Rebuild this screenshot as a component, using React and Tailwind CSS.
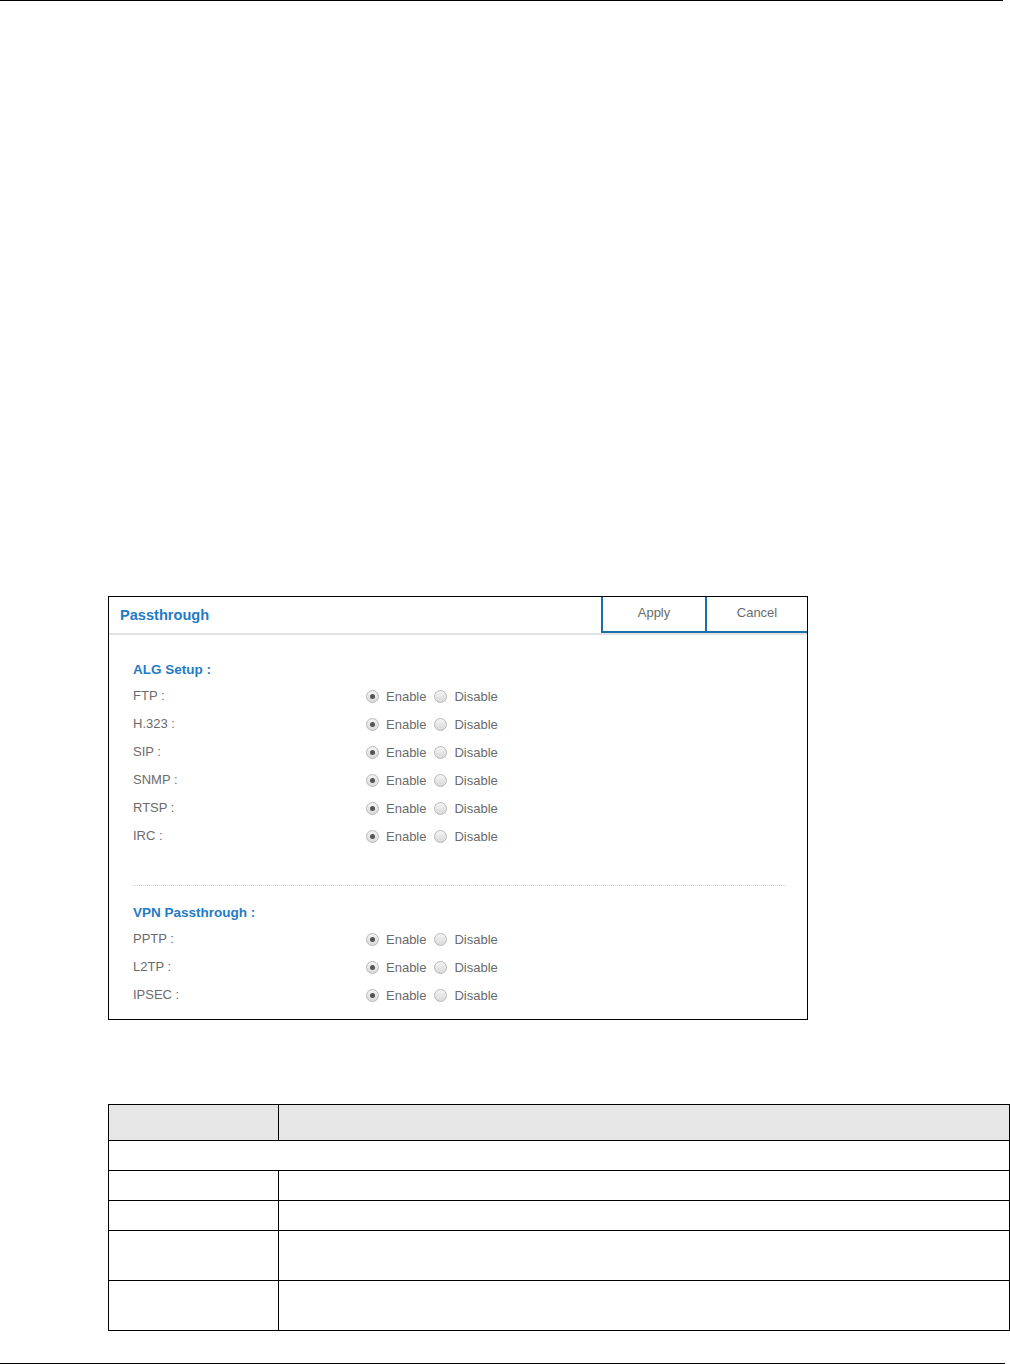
import React from "react";

function Radio({ checked }) {
  return (
    <span className="relative inline-flex h-[13px] w-[13px] items-center justify-center rounded-full border border-[#b8b8b8] bg-[linear-gradient(#f4f4f4,#d9d9d9)]">
      {checked && <span className="h-[5px] w-[5px] rounded-full bg-[#555]" />}
    </span>
  );
}

function Row({ label }) {
  return (
    <div className="flex h-[28px] items-center">
      <div className="w-[233px] text-[13px] text-[#6b6b6b] leading-none">{label}</div>
      <div className="flex items-center pt-[3px] text-[13px] text-[#6b6b6b] leading-none">
        <Radio checked />
        <span className="ml-[7px]">Enable</span>
        <span className="ml-[8px] flex"><Radio /></span>
        <span className="ml-[7px]">Disable</span>
      </div>
    </div>
  );
}

export default function App() {
  const alg = ["FTP :", "H.323 :", "SIP :", "SNMP :", "RTSP :", "IRC :"];
  const vpn = ["PPTP :", "L2TP :", "IPSEC :"];
  return (
    <div className="relative flex h-[1364px] w-[1010px] flex-col bg-white" style={{ fontFamily: '"Liberation Sans", Arial, sans-serif' }}>
      <div className="h-px w-[1003px] bg-black" />
      <div className="ml-[108px] mt-[595px] flex h-[424px] w-[700px] flex-col border border-black">
        <div className="flex h-[36px]">
          <div className="flex flex-1 items-center pl-[11px] pt-[1px] text-[14.6px] font-bold text-[#1f7bc6]">Passthrough</div>
          <div className="flex w-[104px] items-center justify-center border-b-2 border-l-2 border-[#1d6fac] pb-[2px] text-[13px] text-[#6b6b6b]">Apply</div>
          <div className="flex w-[102px] items-center justify-center border-b-2 border-l-2 border-[#1d6fac] pb-[2px] text-[13px] text-[#6b6b6b]">Cancel</div>
        </div>
        <div className="h-[2px] bg-[#e2e2e2]" />
        <div className="flex flex-col px-[24px] pt-[24px]">
          <div className="flex h-[22px] items-center text-[13.5px] font-bold text-[#1f7bc6]">ALG Setup :</div>
          {alg.map((l) => (
            <Row key={l} label={l} />
          ))}
          <div className="mr-[-3px] mt-[36px] border-t border-dotted border-[#cfcfcf]" />
          <div className="mt-[17px] flex h-[21px] items-center text-[13.5px] font-bold text-[#1f7bc6]">VPN Passthrough :</div>
          {vpn.map((l) => (
            <Row key={l} label={l} />
          ))}
        </div>
      </div>
      <table className="ml-[108px] mt-[84px] w-[902px] border-collapse">
        <tbody>
          <tr className="h-[36px] bg-[#e6e6e6]">
            <td className="w-[170px] border border-black" />
            <td className="border border-black" />
          </tr>
          <tr className="h-[30px]">
            <td colSpan={2} className="border border-black" />
          </tr>
          <tr className="h-[30px]">
            <td className="border border-black" />
            <td className="border border-black" />
          </tr>
          <tr className="h-[30px]">
            <td className="border border-black" />
            <td className="border border-black" />
          </tr>
          <tr className="h-[50px]">
            <td className="border border-black" />
            <td className="border border-black" />
          </tr>
          <tr className="h-[50px]">
            <td className="border border-black" />
            <td className="border border-black" />
          </tr>
        </tbody>
      </table>
      <div className="mt-auto h-px w-[1005px] bg-black" />
    </div>
  );
}
